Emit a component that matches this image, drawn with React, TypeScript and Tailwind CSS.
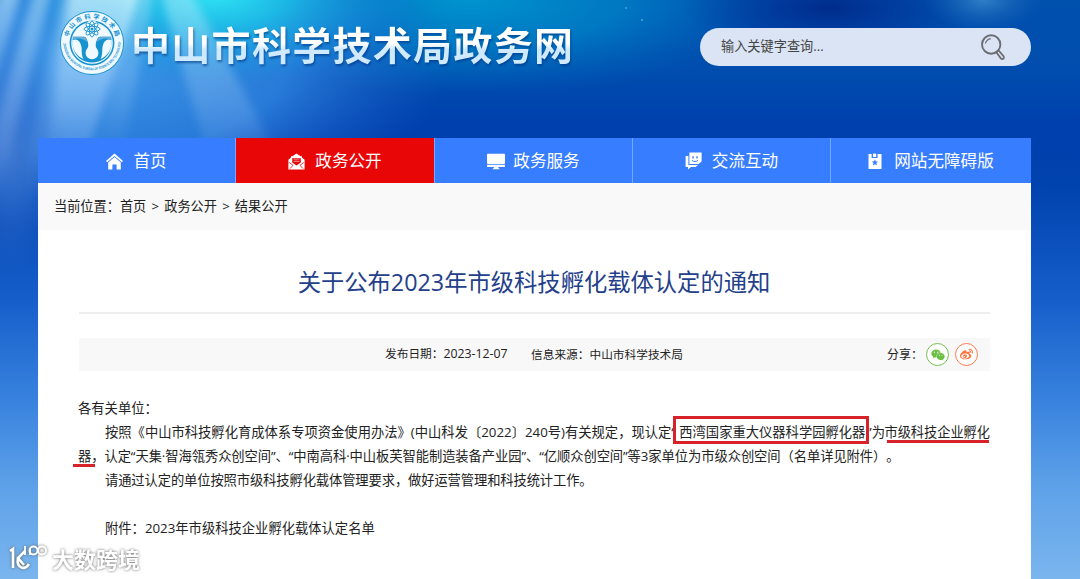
import type { ReactNode } from "react";
import { FaWeixin, FaWeibo } from "react-icons/fa";

const EMBLEM_BLUE = "#1792d0";

function Backdrop() {
  return (
    <svg
      className="absolute inset-0 h-[579px] w-[1080px]"
      viewBox="0 0 1080 579"
      preserveAspectRatio="none"
      aria-hidden="true"
    >
      <defs>
        <linearGradient id="sky" x1="0" y1="0" x2="0" y2="1">
          <stop offset="0" stopColor="#0050ae" />
          <stop offset="0.12" stopColor="#004dae" />
          <stop offset="0.22" stopColor="#003fae" />
          <stop offset="0.32" stopColor="#0042ae" />
          <stop offset="0.52" stopColor="#165fcb" />
          <stop offset="0.7" stopColor="#3a84df" />
          <stop offset="0.85" stopColor="#60a3e9" />
          <stop offset="1" stopColor="#7ab5ee" />
        </linearGradient>
        <radialGradient id="cyan">
          <stop offset="0" stopColor="#2fe4f4" />
          <stop offset="0.35" stopColor="#1cc4e8" stopOpacity="0.85" />
          <stop offset="1" stopColor="#0a8ad8" stopOpacity="0" />
        </radialGradient>
        <radialGradient id="teal">
          <stop offset="0" stopColor="#0094cf" />
          <stop offset="0.5" stopColor="#0084c8" stopOpacity="0.75" />
          <stop offset="1" stopColor="#0070c0" stopOpacity="0" />
        </radialGradient>
        <radialGradient id="azure">
          <stop offset="0" stopColor="#3f9ae8" />
          <stop offset="0.55" stopColor="#2f84e0" stopOpacity="0.85" />
          <stop offset="1" stopColor="#1c62cc" stopOpacity="0" />
        </radialGradient>
        <radialGradient id="navy">
          <stop offset="0" stopColor="#002c8c" />
          <stop offset="1" stopColor="#003098" stopOpacity="0" />
        </radialGradient>
        <radialGradient id="glow">
          <stop offset="0" stopColor="#2f80c8" />
          <stop offset="1" stopColor="#1460b4" stopOpacity="0" />
        </radialGradient>
        <radialGradient id="edge">
          <stop offset="0" stopColor="#3f78d0" />
          <stop offset="1" stopColor="#2a66cc" stopOpacity="0" />
        </radialGradient>
        <linearGradient id="ray" x1="0" y1="0" x2="0" y2="1">
          <stop offset="0" stopColor="#d8fbff" stopOpacity="0.75" />
          <stop offset="0.6" stopColor="#b8d8ff" stopOpacity="0.4" />
          <stop offset="1" stopColor="#a8c8ff" stopOpacity="0" />
        </linearGradient>
        <filter id="soft" x="-50%" y="-30%" width="200%" height="160%">
          <feGaussianBlur stdDeviation="5" />
        </filter>
      </defs>
      <rect width="1080" height="579" fill="url(#sky)" />
      <ellipse cx="470" cy="0" rx="310" ry="95" fill="url(#teal)" />
      <ellipse cx="830" cy="8" rx="150" ry="50" fill="url(#navy)" />
      <ellipse cx="983" cy="0" rx="60" ry="32" fill="url(#glow)" />
      <ellipse cx="90" cy="60" rx="360" ry="170" fill="url(#azure)" />
      <ellipse cx="10" cy="150" rx="60" ry="130" fill="url(#edge)" />
      <ellipse cx="215" cy="-5" rx="200" ry="90" fill="url(#cyan)" />
      <g fill="url(#ray)" filter="url(#soft)">
        <polygon points="70,-10 140,-10 76,190 40,190" />
        <polygon points="0,-10 22,-10 -20,130 -50,130" opacity="0.7" />
        <polygon points="34,-10 52,-10 -4,200 -26,200" opacity="0.6" />
        <polygon points="62,-10 74,-10 36,200 20,200" opacity="0.4" />
        <polygon points="130,-10 155,-10 120,160 96,160" opacity="0.5" />
        <polygon points="160,-10 190,-10 290,180 215,180" opacity="0.55" />
      </g>
      <circle cx="626" cy="8" r="1" fill="#4aa6dc" />
      <circle cx="642" cy="20" r="1" fill="#4aa6dc" />
    </svg>
  );
}

function Emblem() {
  return (
    <svg className="h-[66px] w-[66px] shrink-0" viewBox="0 0 66 66">
      <defs>
        <path id="arcTop" d="M9.2 28 A24.3 24.3 0 0 1 56.8 28" />
        <path id="arcBottom" d="M4.3 31.5 A28.7 28.7 0 1 0 61.7 31.5" />
      </defs>
      <circle cx="33" cy="33" r="32" fill={EMBLEM_BLUE} />
      <circle cx="33" cy="33" r="31.1" fill="#f0f9ff" />
      <circle cx="33" cy="33" r="22.4" fill={EMBLEM_BLUE} />
      <circle cx="33" cy="33" r="20.8" fill="#f0f9ff" />
      <text
        fill={EMBLEM_BLUE}
        fontSize="6.2"
        fontWeight="700"
        fontFamily="'Noto Sans CJK SC', sans-serif"
      >
        <textPath href="#arcTop" startOffset="1" textLength="64">
          中山市科学技术局
        </textPath>
      </text>
      <text fill={EMBLEM_BLUE} fontSize="3.6" fontWeight="700" fontFamily="'Liberation Sans', sans-serif">
        <textPath href="#arcBottom" startOffset="2" textLength="88" lengthAdjust="spacingAndGlyphs">
          ZHONGSHAN MUNICIPAL BUREAU OF SCIENCE AND TECHNOLOGY
        </textPath>
      </text>
      {/* Bowl with the flask cut out of it */}
      <path
        d="M14 27 H52 C53.6 34 52 52 33 52.6 C14 52 12.4 34 14 27Z"
        fill={EMBLEM_BLUE}
      />
      <path
        d="M26 26.5 H40 C37.4 30 36.4 33 36.8 36.5 C37.2 38.6 39.4 39.6 39.4 43.2 A6.4 6 0 0 1 26.6 43.2 C26.6 39.6 28.8 38.6 29.2 36.5 C29.6 33 28.6 30 26 26.5Z"
        fill="#f0f9ff"
      />
      <path d="M13.4 30 C18 28 21.5 31 22.5 37 C23 42 22.4 45 24.5 49 C17 46 12.6 38 13.4 30Z" fill="#f0f9ff" />
      <path d="M52.6 30 C48 28 44.5 31 43.5 37 C43 42 43.6 45 41.5 49 C49 46 53.4 38 52.6 30Z" fill="#f0f9ff" />
      <path d="M14 26.5 H25 C27 28 28 29.5 28.4 32 C24 28.5 19 27.5 13.6 30Z" fill="#62aedb" />
      <path d="M52 26.5 H41 C39 28 38 29.5 37.6 32 C42 28.5 47 27.5 52.4 30Z" fill="#62aedb" />
      <circle cx="33" cy="19" r="8.6" fill="#f0f9ff" />
      <g fill="none" stroke={EMBLEM_BLUE} strokeWidth="0.9">
        <ellipse cx="33" cy="19" rx="2.8" ry="8" />
        <ellipse cx="33" cy="19" rx="2.8" ry="8" transform="rotate(45 33 19)" />
        <ellipse cx="33" cy="19" rx="2.8" ry="8" transform="rotate(90 33 19)" />
        <ellipse cx="33" cy="19" rx="2.8" ry="8" transform="rotate(135 33 19)" />
      </g>
      <circle cx="33" cy="19" r="1.5" fill={EMBLEM_BLUE} />
    </svg>
  );
}

function SearchIcon() {
  return (
    <svg className="h-7 w-7" viewBox="0 0 28 28" fill="none" stroke="#6c6e73">
      <circle cx="12.2" cy="11.5" r="9.2" strokeWidth="1.9" />
      <path d="M6.4 10.5 C7.2 7.6 9.2 6 11.8 5.6" strokeWidth="1.1" />
      <path d="M17.3 19.2 L19.6 17.4 L24.6 23.2 C25.8 25.4 23.4 27 21.8 25.4Z" strokeWidth="1.8" />
    </svg>
  );
}

function HomeIcon() {
  return (
    <svg className="h-[17px] w-[17px]" viewBox="0 0 17 17" fill="#fff">
      <path d="M8.5 0.4 L17 8 L15.8 9.3 L8.5 2.9 L1.2 9.3 L0 8Z" />
      <path d="M8.5 4.1 L14.8 9.6 V16.4 H10.6 V11.6 H6.4 V16.4 H2.2 V9.6Z" />
    </svg>
  );
}

function EnvelopeIcon() {
  return (
    <svg className="h-[17px] w-[17px]" viewBox="0 0 17 17">
      <path d="M8.5 0.4 L12.6 3.2 H14 V4.6 L16.6 6.8 V16.4 H0.4 V6.8 L3 4.6 V3.2 H4.4Z" fill="#fff" />
      <path d="M4.2 5.2 H12.8 V9.6 L8.5 12.6 L4.2 9.6Z" fill="#e60505" />
      <path d="M5.6 6.8 H11.4 M5.6 8.6 H11.4" stroke="#fff" strokeOpacity="0.7" strokeWidth="0.7" />
      <path d="M1.2 9.4 L5 12.4 L2 15.6 M15.8 9.4 L12 12.4 L15 15.6" fill="none" stroke="#e60505" strokeWidth="0.8" />
      <path d="M3 15.4 L7 12.8 L8.5 13.8 L10 12.8 L14 15.4Z" fill="#fff" />
    </svg>
  );
}

function MonitorIcon() {
  return (
    <svg className="h-[17px] w-[18px]" viewBox="0 0 18 17" fill="#fff">
      <rect x="0" y="0.8" width="18" height="10.2" rx="0.8" />
      <rect x="0" y="11.8" width="18" height="2.2" rx="0.6" />
      <path d="M7.4 14 H10.8 L12.8 16.2 H5.6Z" />
    </svg>
  );
}

function ChatIcon() {
  return (
    <svg className="h-[18px] w-[17px]" viewBox="0 0 17 18">
      <path d="M0.6 4 H3.4 V13 H13 L10.6 15 H6 L3 17.6 V15 H0.6Z" fill="#fff" />
      <path d="M4.4 0.6 H16.6 V9.4 L13.6 12 H4.4Z" fill="#fff" />
      <path d="M8 4.2 V6.4 M12 4.2 V6.4" fill="none" stroke="#377dff" strokeWidth="1.4" />
      <path d="M7 8.4 C8.6 9.8 11.4 9.8 13 8.4" fill="none" stroke="#377dff" strokeWidth="1" />
    </svg>
  );
}

function BookmarkIcon() {
  return (
    <svg className="h-[17px] w-[14px]" viewBox="0 0 14 17">
      <path d="M0.5 1 H3.6 V5 H9.6 V1 H13.5 V16 H0.5Z" fill="#fff" />
      <path d="M5 0.6 H8.2 V4 H5Z" fill="#fff" />
      <path
        d="M6.9 6.2 L7.8 8.5 L10.2 8.6 L8.3 10.1 L9 12.5 L6.9 11.2 L4.8 12.5 L5.5 10.1 L3.6 8.6 L6 8.5Z"
        fill="#377dff"
      />
    </svg>
  );
}

type NavItem = {
  label: string;
  icon: ReactNode;
  className: string;
};

const NAV_ITEMS: NavItem[] = [
  { label: "首页", icon: <HomeIcon />, className: "w-[198px] gap-[10px] bg-[#377dff]" },
  { label: "政务公开", icon: <EnvelopeIcon />, className: "w-[199px] gap-[10px] bg-[#e80606]" },
  { label: "政务服务", icon: <MonitorIcon />, className: "w-[198px] gap-2 bg-[#377dff]" },
  { label: "交流互动", icon: <ChatIcon />, className: "w-[198px] gap-[10px] bg-[#377dff]" },
  { label: "网站无障碍版", icon: <BookmarkIcon />, className: "w-[200px] gap-[12px] bg-[#377dff]" },
];

export default function App() {
  return (
    <div className="relative h-[579px] w-[1080px] overflow-hidden bg-[#0042ae] font-['Open_Sans','Noto_Sans_CJK_SC',sans-serif] text-[#222]">
      <Backdrop />

      <div className="relative ml-[38px] flex h-full w-[993px] flex-col">
        {/* Header */}
        <header className="flex h-[138px] shrink-0 items-start justify-between">
          <div className="flex items-start pt-[10px] pl-[21px]">
            <Emblem />
            <h1 className="ml-[6px] bg-linear-to-b from-white from-50% to-[#cfe9ff] to-60% bg-clip-text font-['Noto_Sans_CJK_SC',sans-serif] text-[39px] leading-[66px] font-bold tracking-[1.3px] whitespace-nowrap text-transparent drop-shadow-[1px_2px_1px_rgba(0,50,130,0.6)]">
              中山市科学技术局政务网
            </h1>
          </div>
          <div className="mt-7 flex h-[38px] w-[331px] items-center justify-between rounded-full bg-[#dbe4f4] pr-6 pl-[21px]">
            <span className="text-[13.2px] text-[#444]">输入关键字查询...</span>
            <SearchIcon />
          </div>
        </header>

        {/* Navigation */}
        <nav className="flex h-[45px] shrink-0 divide-x divide-[#77a8ff]">
          {NAV_ITEMS.map((item) => (
            <a
              key={item.label}
              className={`flex items-center justify-center pt-px text-[16.6px] whitespace-nowrap text-white ${item.className}`}
            >
              {item.icon}
              <span className="pt-px">{item.label}</span>
            </a>
          ))}
        </nav>

        <main className="flex-1 bg-white">
          <div className="flex h-[47px] items-center bg-[#f9f9f9] pl-4 text-[13.2px] [word-spacing:1.75px] whitespace-pre">
            当前位置：首页 &gt; 政务公开 &gt; 结果公开
          </div>

          <article className="mx-auto w-[911px]">
            <h2 className="flex h-[84px] items-center justify-center border-b-2 border-[#eee] pt-[22px] pr-px text-[23.3px] whitespace-nowrap text-[#24408a]">
              关于公布2023年市级科技孵化载体认定的通知
            </h2>

            <div className="mt-6 flex h-[33px] items-center bg-[#f8f8f8] text-[11.7px] whitespace-nowrap">
              <span className="ml-[306px] w-[146px]">
                发布日期：<span className="text-[12.3px]">2023-12-07</span>
              </span>
              <span>信息来源：中山市科学技术局</span>
              <span className="ml-auto w-[39px] text-[12px]">分享：</span>
              <span className="flex size-[23px] items-center justify-center rounded-full border border-[#74c04e] bg-white text-[#6cbf45]">
                <FaWeixin size={14} />
              </span>
              <span className="mr-3 ml-[6px] flex size-[23px] items-center justify-center rounded-full border border-[#ff7a4d] bg-white text-[#ff7440]">
                <FaWeibo size={13} />
              </span>
            </div>

            {/* Notice text */}
            <div className="-ml-px mt-[25px] text-[13.3px] leading-6 whitespace-nowrap">
              <p>各有关单位：</p>
              <p className="flex pl-[27px]">
                <span className="w-[575px]">
                  按照《中山市科技孵化育成体系专项资金使用办法》(中山科发〔2022〕240号)有关规定，现认定“
                </span>
                <span className="relative w-[187px]">
                  西湾国家重大仪器科学园孵化器
                  <span className="absolute -top-[4px] -left-[6px] h-[28px] w-[196px] border-[3px] border-[#d8222a]" />
                </span>
                <span className="w-[18.5px] pl-[1px]">”为</span>
                <span className="relative text-[13.2px]">
                  市级科技企业孵化
                  <span className="absolute top-[20px] left-[2px] h-[3px] w-[102px] bg-[#d8222a]" />
                </span>
              </p>
              <p className="tracking-[-0.08px] [text-spacing-trim:space-all]">
                <span className="relative">
                  器
                  <span className="absolute top-[17px] -left-[5px] h-[3px] w-[22px] bg-[#d8222a]" />
                </span>
                ，认定“天集·智海瓴秀众创空间”、“中南高科·中山板芙智能制造装备产业园”、“亿顺众创空间”等3家单位为市级众创空间（名单详见附件）。
              </p>
              <p className="pl-[27px] tracking-[-0.12px]">
                请通过认定的单位按照市级科技孵化载体管理要求，做好运营管理和科技统计工作。
              </p>
              <p className="mt-6 pl-[27px]">附件：2023年市级科技企业孵化载体认定名单</p>
            </div>
          </article>
        </main>
      </div>

      {/* Watermark */}
      <div className="absolute top-[543px] left-[8px] flex items-center gap-1 text-white drop-shadow-[0_0_1.5px_rgba(90,90,90,0.9)]">
        <svg className="h-[30px] w-10" viewBox="0 0 40 30" fill="none" stroke="currentColor" strokeWidth="2.6">
          <path d="M2 8 L5 6 V25 M17 8 L10 15 L16 22 M10 15 C8 25 17 28 21 21" />
          <path d="M17 3 V12 M22 5 V12" strokeWidth="1.8" />
          <circle cx="25.5" cy="7.5" r="4" strokeWidth="2" />
          <circle cx="34" cy="7.5" r="4" strokeWidth="2" />
        </svg>
        <span className="font-['Noto_Sans_CJK_SC',sans-serif] text-[22px] leading-[30px] font-bold whitespace-nowrap">
          大数跨境
        </span>
      </div>
    </div>
  );
}
